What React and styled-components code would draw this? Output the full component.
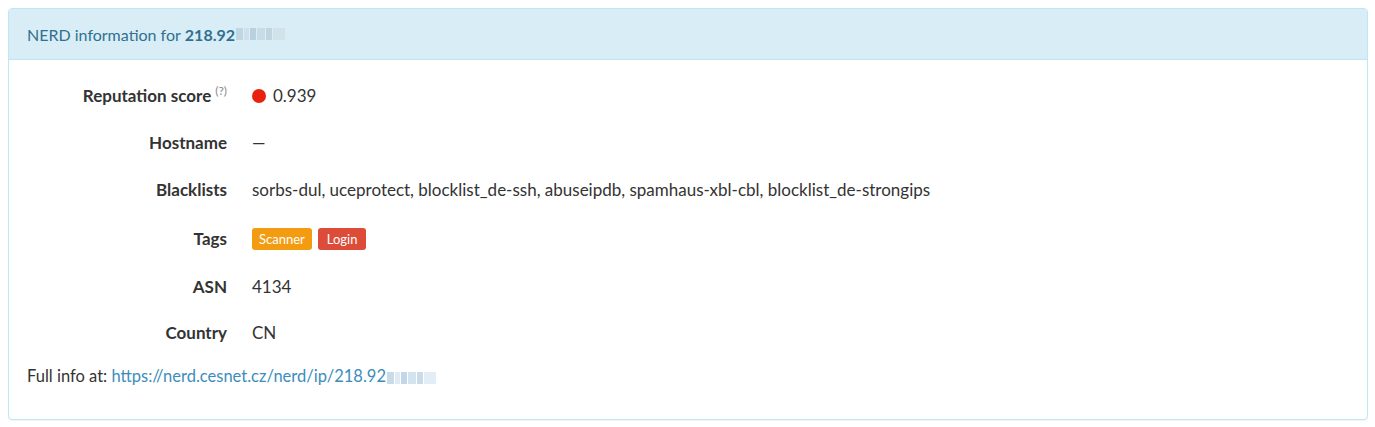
import React from "react";
import styled, { createGlobalStyle } from "styled-components";

const Global = createGlobalStyle`
  html, body { margin: 0; padding: 0; background: #fff; }
  body { font-family: "Source Sans Pro", Lato, "Noto Sans", sans-serif; font-size: 16px; color: #333; }
`;

const Page = styled.div`
  padding: 8px 7px 7px 8px;
`;

const Panel = styled.div`
  border: 1px solid #bce8f1;
  border-radius: 4px;
  background: #fff;
  box-shadow: 0 1px 1px rgba(0,0,0,0.05);
`;

const Heading = styled.div`
  background: #d9edf7;
  color: #31708f;
  border-bottom: 1px solid #bce8f1;
  border-radius: 3px 3px 0 0;
  height: 50px;
  padding: 0 18px;
  display: flex;
  align-items: center;
  font-size: 16px;
`;

const Strong = styled.b`
  font-weight: 700;
  margin-left: 4px;
`;

const Body = styled.div`
  padding: 12px 18px 33px 18px;
`;

const List = styled.dl`
  margin: 0;
  display: grid;
  grid-template-columns: 200px 1fr;
  grid-template-rows: 47px 47px 47px 51px 45px 47px;
  column-gap: 25px;
  align-items: center;
  font-size: 17px;
`;

const Label = styled.dt`
  text-align: right;
  font-weight: 700;
  color: #333;
`;

const Value = styled.dd`
  margin: 0;
  display: flex;
  align-items: center;
  gap: 6px;
`;

const Help = styled.sup`
  font-weight: 400;
  color: #8a8a8a;
  font-size: 12px;
  margin-left: 4px;
  vertical-align: 7px;
  line-height: 1;
`;

const Dot = styled.span`
  width: 14px;
  height: 14px;
  border-radius: 50%;
  background: #e8220e;
  margin-right: 1px;
`;

const Badge = styled.span`
  background: ${(p) => p.$color};
  color: #fff;
  font-size: 13px;
  height: 22px;
  padding: 0 ${(p) => p.$pad}px;
  border-radius: 3px;
  display: inline-flex;
  align-items: center;
`;

const Footer = styled.div`
  margin-top: 10px;
  font-size: 16.5px;
  line-height: 20px;
`;

const Link = styled.a`
  color: #3c8dbc;
  text-decoration: none;
`;

const Blur = styled.span`
  display: inline-flex;
  align-items: center;
  gap: 1px;
  margin-left: 1px;
  vertical-align: middle;
`;

const Px = styled.span`
  display: inline-block;
  width: ${(p) => p.$w}px;
  height: 12px;
  background: ${(p) => p.$c};
`;

function Pixelated({ tone }) {
  const c = tone === "link"
    ? ["#c7dbe9", "#dfeaf3", "#c2d7e7", "#d4e4ef", "#c9dcea", "#e3edf5"]
    : ["#c0d6e2", "#cfe0ea", "#b9d1de", "#c8dbe6", "#bfd5e1", "#d2e2eb"];
  return (
    <Blur>
      <Px $w={7} $c={c[0]} />
      <Px $w={5} $c={c[1]} />
      <Px $w={6} $c={c[2]} />
      <Px $w={8} $c={c[3]} />
      <Px $w={6} $c={c[4]} />
      <Px $w={12} $c={c[5]} />
    </Blur>
  );
}

export default function App() {
  return (
    <>
      <Global />
      <Page>
        <Panel>
          <Heading>
            NERD information for <Strong>218.92</Strong>
            <Pixelated />
          </Heading>
          <Body>
            <List>
              <Label>
                Reputation score<Help>(?)</Help>
              </Label>
              <Value>
                <Dot /> 0.939
              </Value>
              <Label>Hostname</Label>
              <Value>—</Value>
              <Label>Blacklists</Label>
              <Value>
                sorbs-dul, uceprotect, blocklist_de-ssh, abuseipdb, spamhaus-xbl-cbl, blocklist_de-strongips
              </Value>
              <Label>Tags</Label>
              <Value>
                <Badge $color="#f39c12" $pad={7}>Scanner</Badge>
                <Badge $color="#dd4b39" $pad={9}>Login</Badge>
              </Value>
              <Label>ASN</Label>
              <Value>4134</Value>
              <Label>Country</Label>
              <Value>CN</Value>
            </List>
            <Footer>
              Full info at:{" "}
              <Link href="#">https://nerd.cesnet.cz/nerd/ip/218.92</Link>
              <Pixelated tone="link" />
            </Footer>
          </Body>
        </Panel>
      </Page>
    </>
  );
}
